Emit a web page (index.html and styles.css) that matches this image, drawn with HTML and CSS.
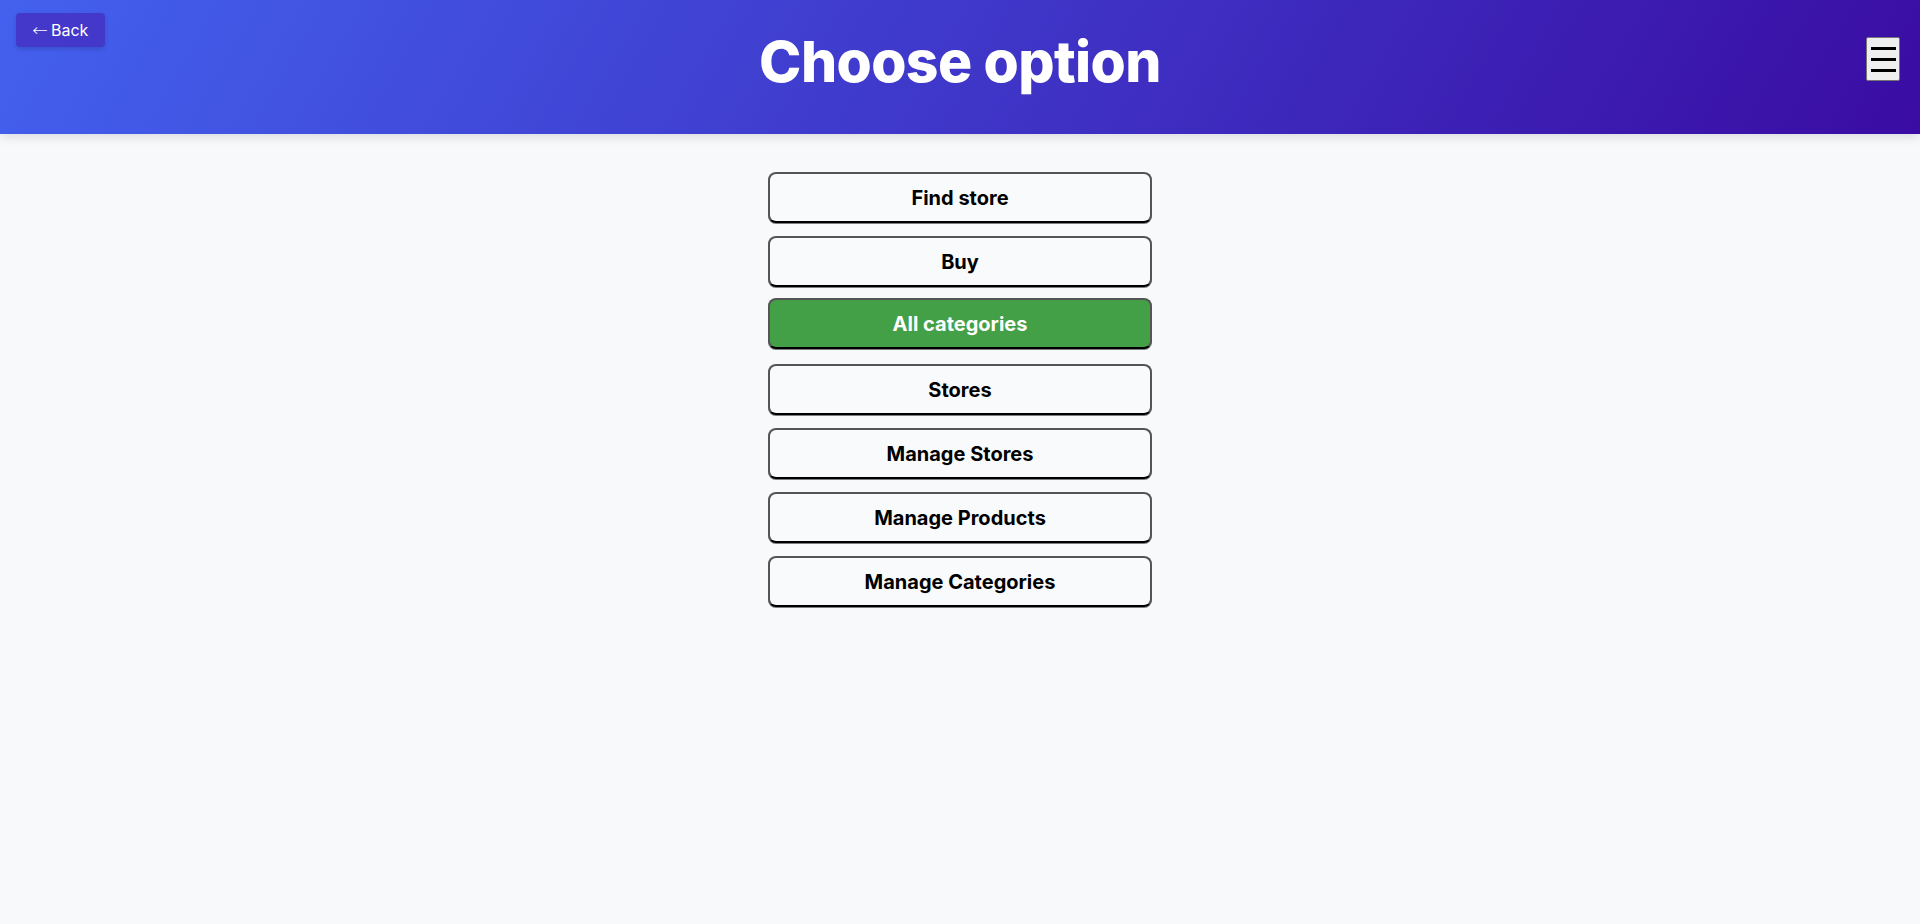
FILE: index.html
```html
<!DOCTYPE html>
<html lang="en">
<head>
<meta charset="utf-8">
<title>Choose option</title>
<link rel="stylesheet" href="styles.css">
</head>
<body>
<header class="topbar">
  <div class="topbar-left">
    <button class="back-btn" type="button"><span class="back-arrow">←</span> Back</button>
  </div>
  <h1 class="title">Choose option</h1>
  <div class="topbar-right">
    <button class="menu-btn" type="button" aria-label="Menu">
      <span class="menu-line"></span>
      <span class="menu-line"></span>
      <span class="menu-line"></span>
    </button>
  </div>
</header>
<main class="options">
  <button class="option" type="button">Find store</button>
  <button class="option" type="button">Buy</button>
  <button class="option option-active" type="button">All categories</button>
  <button class="option" type="button">Stores</button>
  <button class="option" type="button">Manage Stores</button>
  <button class="option" type="button">Manage Products</button>
  <button class="option" type="button">Manage Categories</button>
</main>
</body>
</html>
```

FILE: styles.css
```css
* { box-sizing: border-box; }

html, body {
  margin: 0;
  padding: 0;
}

body {
  background: #f8f9fb;
  font-family: Inter, "Liberation Sans", sans-serif;
  color: #000;
  min-height: 924px;
}

.topbar {
  height: 134px;
  background: linear-gradient(120deg, #4361ee 0%, #3f37c9 50%, #3a0ca3 100%);
  box-shadow: 0 3px 10px rgba(0, 0, 0, 0.12);
  display: grid;
  grid-template-columns: 1fr auto 1fr;
  align-items: start;
}

.topbar-left {
  padding: 13px 0 0 16px;
}

.back-btn {
  height: 34px;
  width: 89px;
  padding: 0;
  border: none;
  border-radius: 4px;
  background: #4338ca;
  color: #fff;
  font-family: Inter, "Liberation Sans", sans-serif;
  font-size: 16px;
  box-shadow: 0 2px 4px rgba(0, 0, 0, 0.15);
  display: flex;
  align-items: center;
  justify-content: center;
  gap: 4px;
}

.back-arrow {
  font-family: "DejaVu Sans", sans-serif;
  font-weight: 300;
  font-size: 17px;
  display: inline-block;
  transform: scaleX(1.1);
}

.title {
  margin: 0;
  padding-top: 28px;
  color: #fff;
  font-family: Inter, "Liberation Sans", sans-serif;
  font-weight: 800;
  font-size: 57px;
  line-height: 68px;
  letter-spacing: -0.6px;
}

.topbar-right {
  display: flex;
  justify-content: flex-end;
  padding: 37px 20px 0 0;
}

.menu-btn {
  width: 34px;
  height: 44px;
  padding: 0;
  background: #efefef;
  border: 1px solid #767676;
  border-radius: 2px;
  display: flex;
  flex-direction: column;
  align-items: center;
  justify-content: center;
  gap: 8px;
}

.menu-line {
  display: block;
  width: 25px;
  height: 3px;
  background: #000;
}

.options {
  display: flex;
  flex-direction: column;
  align-items: center;
  gap: 13px;
  padding-top: 38px;
}

.option {
  width: 384px;
  height: 51px;
  margin: 0;
  padding: 0;
  background: #f9fafb;
  border: 2px solid #555;
  border-bottom-color: #000;
  border-radius: 8px;
  box-shadow: 0 1px 0 rgba(0, 0, 0, 0.5);
  font-family: Inter, "Liberation Sans", sans-serif;
  font-weight: 700;
  font-size: 20px;
  color: #000;
}

.option-active {
  background: #43a047;
  color: #fff;
  transform: translateY(-2px);
}
```
